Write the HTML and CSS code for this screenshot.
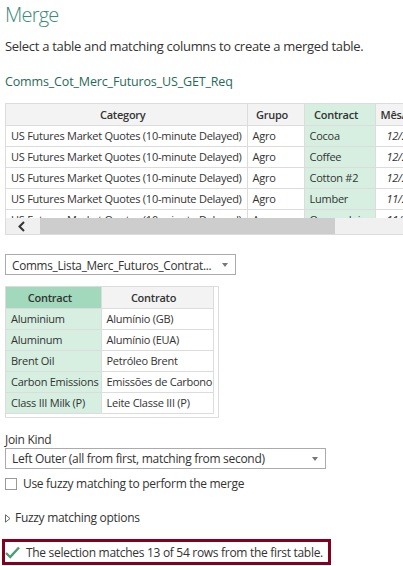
FILE: index.html
```html
<!DOCTYPE html>
<html lang="en">
  <head>
    <meta charset="UTF-8" />
    <title>Merge</title>
    <link rel="stylesheet" href="styles.css">
  </head>
  <body>
    <h1 class="title">Merge</h1>
    <p class="intro">Select a table and matching columns to create a merged table.</p>

    <div class="source-name">Comms_Cot_Merc_Futuros_US_GET_Req</div>

    <div class="grid grid-main">
      <div class="grid-rows">
        <table class="table-main">
          <colgroup>
            <col style="width: 241px" />
            <col style="width: 57px" />
            <col style="width: 71px" />
            <col style="width: 60px" />
          </colgroup>
          <thead>
            <tr>
              <th>Category</th>
              <th>Grupo</th>
              <th class="sel">Contract</th>
              <th>Mês/Ano</th>
            </tr>
          </thead>
          <tbody>
            <tr>
              <td>US Futures Market Quotes (10-minute Delayed)</td>
              <td>Agro</td>
              <td class="sel">Cocoa</td>
              <td class="date">12/2019</td>
            </tr>
            <tr>
              <td>US Futures Market Quotes (10-minute Delayed)</td>
              <td>Agro</td>
              <td class="sel">Coffee</td>
              <td class="date">12/2019</td>
            </tr>
            <tr>
              <td>US Futures Market Quotes (10-minute Delayed)</td>
              <td>Agro</td>
              <td class="sel">Cotton #2</td>
              <td class="date">12/2019</td>
            </tr>
            <tr>
              <td>US Futures Market Quotes (10-minute Delayed)</td>
              <td>Agro</td>
              <td class="sel">Lumber</td>
              <td class="date">11/2019</td>
            </tr>
            <tr>
              <td>US Futures Market Quotes (10-minute Delayed)</td>
              <td>Agro</td>
              <td class="sel">Orange Juice</td>
              <td class="date">11/2019</td>
            </tr>
          </tbody>
        </table>
      </div>
      <div class="hscroll">
        <span class="hscroll-arrow">
          <svg width="9" height="11" viewBox="0 0 9 11">
            <path d="M7 1 L2.5 5.5 L7 10" fill="none" stroke="#333" stroke-width="2" />
          </svg>
        </span>
        <span class="hscroll-thumb"></span>
      </div>
    </div>

    <div class="select select-table">
      <span>Comms_Lista_Merc_Futuros_Contrat...</span>
      <span class="caret"></span>
    </div>

    <div class="grid grid-second">
      <table class="table-second">
        <colgroup>
          <col style="width: 95px" />
          <col style="width: 112px" />
        </colgroup>
        <thead>
          <tr>
            <th class="sel-head">Contract</th>
            <th>Contrato</th>
          </tr>
        </thead>
        <tbody>
          <tr><td class="sel">Aluminium</td><td>Alumínio (GB)</td></tr>
          <tr><td class="sel">Aluminum</td><td>Alumínio (EUA)</td></tr>
          <tr><td class="sel">Brent Oil</td><td>Petróleo Brent</td></tr>
          <tr><td class="sel">Carbon Emissions</td><td>Emissões de Carbono</td></tr>
          <tr><td class="sel">Class III Milk (P)</td><td>Leite Classe III (P)</td></tr>
        </tbody>
      </table>
    </div>

    <div class="field-label">Join Kind</div>
    <div class="select select-join">
      <span>Left Outer (all from first, matching from second)</span>
      <span class="caret"></span>
    </div>

    <label class="check-row">
      <span class="checkbox"></span>
      Use fuzzy matching to perform the merge
    </label>

    <div class="expander">
      <svg width="6" height="9" viewBox="0 0 6 9">
        <path d="M0.5 0.8 L5 4.5 L0.5 8.2 Z" fill="none" stroke="#666" stroke-width="1" />
      </svg>
      Fuzzy matching options
    </div>

    <div class="status">
      <svg class="status-icon" width="15" height="13" viewBox="0 0 15 13">
        <path d="M1 7 L5.2 11 L14 1.5" fill="none" stroke="#4a9d72" stroke-width="2.4" />
      </svg>
      <span>The selection matches 13 of 54 rows from the first table.</span>
    </div>
  </body>
</html>
```

FILE: styles.css
```css
* {
  box-sizing: border-box;
}

body {
  margin: 0;
  padding: 0 0 0 5px;
  font-family: "Open Sans", "Noto Sans", sans-serif;
  font-size: 12px;
  letter-spacing: -0.3px;
  color: #333;
  background: white;
  overflow: hidden;
}

.title {
  margin: 0;
  padding-top: 2px;
  font-size: 20px;
  font-weight: 300;
  line-height: 26px;
  letter-spacing: -0.8px;
  color: #3c8a78;
}

.intro {
  margin: 9px 0 0;
  font-size: 13px;
  line-height: 18px;
}

.source-name {
  margin-top: 18px;
  font-size: 12.5px;
  line-height: 18px;
  letter-spacing: -0.15px;
  color: #1f6b58;
}

/* tables */
.grid {
  border: 1px solid #dcdcdc;
  background: white;
  overflow: hidden;
}

.grid table {
  border-collapse: collapse;
  table-layout: fixed;
}

.table-main {
  width: 429px;
}

.table-second {
  width: 207px;
}

.grid th,
.grid td {
  height: 21px;
  padding: 0 5px;
  border: 1px solid #dcdcdc;
  white-space: nowrap;
  overflow: hidden;
  font-size: 11px;
  letter-spacing: -0.25px;
}

.grid thead tr th {
  border-top: none;
}

.grid tr > :first-child {
  border-left: none;
}

.grid th {
  padding-right: 12px;
  background: #f3f3f3;
  font-weight: 600;
  text-align: center;
  color: #333;
}

.grid .sel {
  background: #d6efe1;
}

.grid th.sel-head {
  background: #a2d9bc;
}

.grid td.date {
  font-style: italic;
  padding-left: 11px;
}

.grid-main {
  margin-top: 12px;
  width: 399px;
}

.grid-rows {
  height: 114px;
  overflow: hidden;
}

.hscroll {
  display: flex;
  align-items: center;
  height: 16px;
  background: #f0f0f0;
}

.hscroll-arrow {
  width: 34px;
  display: flex;
  justify-content: center;
  padding-right: 4px;
}

.hscroll-thumb {
  width: 295px;
  height: 16px;
  background: #cdcdcd;
}

/* selects */
.select {
  display: flex;
  align-items: center;
  justify-content: space-between;
  height: 21px;
  padding: 0 7px 0 6px;
  border: 1px solid #ababab;
  background: white;
}

.caret {
  width: 0;
  height: 0;
  border-left: 3.5px solid transparent;
  border-right: 3.5px solid transparent;
  border-top: 4px solid #777;
}

.select-table {
  margin-top: 19px;
  width: 231px;
  font-size: 11.75px;
  letter-spacing: -0.25px;
}

.grid-second {
  margin-top: 11px;
  width: 214px;
  height: 132px;
}

.field-label {
  margin-top: 14px;
  line-height: 16px;
}

.select-join {
  margin-top: 0;
  width: 321px;
}

.check-row {
  display: flex;
  align-items: center;
  gap: 6px;
  margin-top: 7px;
  line-height: 16px;
}

.checkbox {
  width: 12px;
  height: 12px;
  border: 1px solid #999;
  background: white;
}

.expander {
  display: flex;
  align-items: center;
  gap: 4px;
  margin-top: 18px;
  line-height: 16px;
}

.status {
  display: flex;
  align-items: center;
  gap: 6px;
  width: 329px;
  height: 26px;
  margin: 13px 0 0 -3px;
  padding-left: 0;
  border: 3px solid #830021;
  white-space: nowrap;
}

.status-icon {
  flex-shrink: 0;
}
```
